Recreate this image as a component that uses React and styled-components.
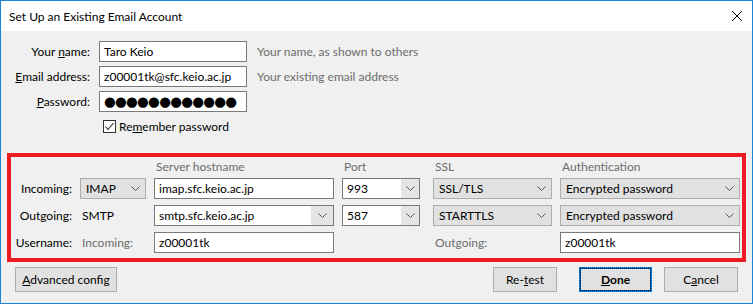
import React from "react";
import styled, { createGlobalStyle } from "styled-components";

const GlobalStyle = createGlobalStyle`
  body {
    margin: 0;
    background: #ffffff;
    font-family: Lato, "Noto Sans", "Liberation Sans", sans-serif;
    font-size: 12px;
    color: #000;
  }
  * { box-sizing: border-box; }
`;

const Window = styled.div`
  width: 753px;
  height: 304px;
  border: 1px solid #1c84d6;
  background: #f0f0f0;
  display: flex;
  flex-direction: column;
`;

const TitleBar = styled.div`
  height: 30px;
  background: #fff;
  display: flex;
  align-items: center;
  justify-content: space-between;
  padding: 0 10px 0 8px;
  font-size: 12px;
`;

const Body = styled.div`
  padding: 10px 6px 0;
  display: flex;
  flex-direction: column;
`;

const IdentityGrid = styled.div`
  display: grid;
  grid-template-columns: 83px 148px auto;
  grid-auto-rows: 21px;
  column-gap: 9px;
  row-gap: 4px;
  align-items: center;
`;

const Label = styled.label`
  text-align: right;
  white-space: nowrap;
  color: ${(p) => (p.$muted ? "#6d6d6d" : "#000")};
`;

const Hint = styled.span`
  color: #6d6d6d;
  margin-left: 1px;
  white-space: nowrap;
`;

const Field = styled.div`
  height: 21px;
  width: ${(p) => p.$w || "100%"};
  border: 1px solid #7a7a7a;
  background: #fff;
  padding: 0 4px;
  display: flex;
  align-items: center;
  white-space: nowrap;
  overflow: hidden;
`;

const Dots = styled.span`
  font-family: "DejaVu Sans", sans-serif;
  font-size: 13.5px;
  letter-spacing: -0.75px;
  line-height: 1;
`;

const CheckRow = styled.div`
  grid-column: 2 / span 2;
  display: flex;
  align-items: center;
  gap: 3px;
  padding-left: 4px;
`;

const CheckBox = styled.span`
  width: 13px;
  height: 13px;
  border: 1px solid #333;
  background: #fff;
  display: inline-flex;
  align-items: center;
  justify-content: center;
`;

const ServerBox = styled.div`
  margin-top: 16px;
  border: 4px solid #ed1c24;
  padding: 2px 0 5px;
  display: grid;
  grid-template-columns: 61px 66px 180px 83px 119px 180px;
  grid-template-rows: 13px 21px 21px 21px;
  column-gap: 8px;
  row-gap: 6px;
  align-items: center;
`;

const ColHead = styled.div`
  align-self: start;
  color: #6d6d6d;
  padding-left: 2px;
  line-height: 16px;
  white-space: nowrap;
`;

const Plain = styled.div`
  padding-left: 2px;
  color: ${(p) => (p.$muted ? "#6d6d6d" : "#000")};
  white-space: nowrap;
`;

const Select = styled.div`
  height: 21px;
  width: ${(p) => p.$w || "100%"};
  border: 1px solid #adadad;
  background: #e1e1e1;
  display: flex;
  align-items: center;
  justify-content: space-between;
  padding: 0 5px 0 5px;
  white-space: nowrap;
`;

const Combo = styled.div`
  height: 21px;
  width: ${(p) => p.$w || "100%"};
  border: 1px solid #7a7a7a;
  background: #fff;
  display: flex;
  align-items: stretch;
`;

const ComboText = styled.span`
  flex: 1;
  display: flex;
  align-items: center;
  padding-left: 4px;
  white-space: nowrap;
`;

const ComboButton = styled.span`
  width: ${(p) => p.$w}px;
  background: #e5e5e5;
  display: flex;
  align-items: center;
  justify-content: center;
`;

const ButtonBar = styled.div`
  margin-top: 5px;
  padding: 0 8px;
  display: flex;
  align-items: center;
`;

const Button = styled.div`
  height: 25px;
  width: ${(p) => p.$w}px;
  margin-left: ${(p) => p.$gap || 0}px;
  border: 1px solid #adadad;
  background: #e1e1e1;
  display: flex;
  align-items: center;
  justify-content: center;
  font-size: 12px;
  ${(p) =>
    p.$default &&
    `
    border: 2px solid #0078d7;
    outline: 1px dotted #000;
    outline-offset: -2px;
    font-weight: bold;
  `}
`;

const Spacer = styled.div`
  flex: 1;
`;

const Chevron = () => (
  <svg width="9" height="5" viewBox="0 0 9 5">
    <polyline points="0.5,0.5 4.5,4.5 8.5,0.5" fill="none" stroke="#555" strokeWidth="1" />
  </svg>
);

const CloseIcon = () => (
  <svg width="10" height="10" viewBox="0 0 10 10">
    <path d="M0 0L10 10M10 0L0 10" stroke="#000" strokeWidth="1" />
  </svg>
);

const Check = () => (
  <svg width="11" height="11" viewBox="0 0 11 11">
    <polyline points="1.5,5.5 4,8.5 9.5,2" fill="none" stroke="#222" strokeWidth="1.1" />
  </svg>
);

export default function App() {
  return (
    <>
      <GlobalStyle />
      <Window>
        <TitleBar>
          <span>Set Up an Existing Email Account</span>
          <CloseIcon />
        </TitleBar>
        <Body>
          <IdentityGrid>
            <Label>
              Your <u>n</u>ame:
            </Label>
            <Field>Taro Keio</Field>
            <Hint>Your name, as shown to others</Hint>

            <Label>
              <u>E</u>mail address:
            </Label>
            <Field>z00001tk@sfc.keio.ac.jp</Field>
            <Hint>Your existing email address</Hint>

            <Label>
              <u>P</u>assword:
            </Label>
            <Field>
              <Dots>●●●●●●●●●●●●</Dots>
            </Field>
            <span />

            <span />
            <CheckRow>
              <CheckBox>
                <Check />
              </CheckBox>
              <span>
                Re<u>m</u>ember password
              </span>
            </CheckRow>
          </IdentityGrid>

          <ServerBox>
            <span />
            <span />
            <ColHead>Server hostname</ColHead>
            <ColHead>Port</ColHead>
            <ColHead>SSL</ColHead>
            <ColHead>Authentication</ColHead>

            <Label>Incoming:</Label>
            <Select>
              IMAP <Chevron />
            </Select>
            <Field>imap.sfc.keio.ac.jp</Field>
            <Combo $w="78px">
              <ComboText>993</ComboText>
              <ComboButton $w={18}>
                <Chevron />
              </ComboButton>
            </Combo>
            <Select>
              SSL/TLS <Chevron />
            </Select>
            <Select>
              Encrypted password <Chevron />
            </Select>

            <Label>Outgoing:</Label>
            <Plain>SMTP</Plain>
            <Combo>
              <ComboText>smtp.sfc.keio.ac.jp</ComboText>
              <ComboButton $w={22}>
                <Chevron />
              </ComboButton>
            </Combo>
            <Combo $w="78px">
              <ComboText>587</ComboText>
              <ComboButton $w={18}>
                <Chevron />
              </ComboButton>
            </Combo>
            <Select>
              STARTTLS <Chevron />
            </Select>
            <Select>
              Encrypted password <Chevron />
            </Select>

            <Label>Username:</Label>
            <Plain $muted>Incoming:</Plain>
            <Field>z00001tk</Field>
            <span />
            <Plain $muted>Outgoing:</Plain>
            <Field>z00001tk</Field>
          </ServerBox>

          <ButtonBar>
            <Button $w={102}>
              <span>
                <u>A</u>dvanced config
              </span>
            </Button>
            <Spacer />
            <Button $w={64}>
              <span>
                Re-<u>t</u>est
              </span>
            </Button>
            <Button $w={73} $gap={22} $default>
              <span>
                <u>D</u>one
              </span>
            </Button>
            <Button $w={74} $gap={12}>
              <span>
                C<u>a</u>ncel
              </span>
            </Button>
          </ButtonBar>
        </Body>
      </Window>
    </>
  );
}
